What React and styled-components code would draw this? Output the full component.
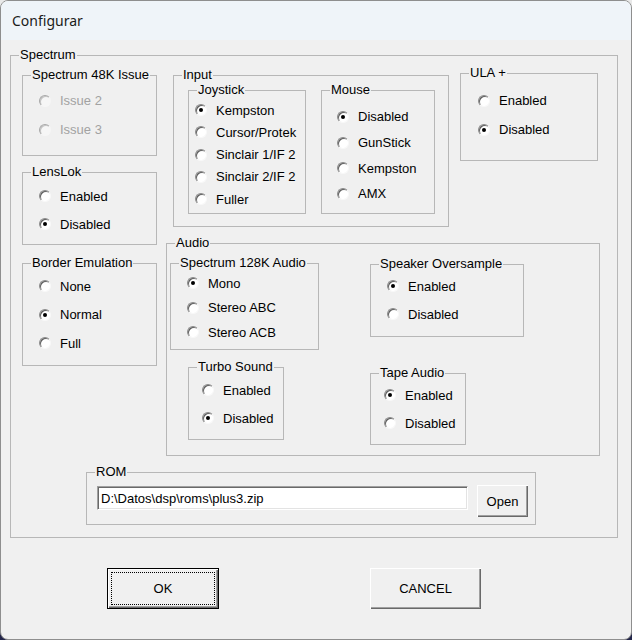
import React from 'react'
import styled, { createGlobalStyle } from 'styled-components'

const GlobalStyle = createGlobalStyle`
    html, body {
        margin: 0;
        padding: 0;
    }
    body {
        background: linear-gradient(#e9e9e9 0 50%, #23264a 50%);
        font-family: "Liberation Sans", Arial, sans-serif;
        font-size: 13px;
        color: #000;
    }
`;

const Window = styled.div`
    box-sizing: border-box;
    width: 632px;
    height: 640px;
    border: 1px solid #8e8e8e;
    border-radius: 8px;
    overflow: hidden;
    background: #f0f0f0;
    display: flex;
    flex-direction: column;
`;

const TitleBar = styled.div`
    height: 39px;
    flex-shrink: 0;
    display: flex;
    align-items: center;
    padding-left: 11px;
    background: #eff4f9;
    font-family: "Noto Sans", "Liberation Sans", sans-serif;
    font-size: 14px;
    color: #1b1b1b;
`;

const Client = styled.div`
    padding: 8px 0 0 9px;
    display: flex;
    flex-direction: column;
`;

const Group = styled.fieldset`
    box-sizing: border-box;
    margin: ${p => p.$m || '0'};
    padding: 0;
    min-width: 0;
    width: ${p => p.$w}px;
    height: ${p => (p.$h ? `${p.$h}px` : 'auto')};
    border: 1px solid #b7b7b7;
    flex-shrink: 0;

    legend {
        margin-left: 8px;
        padding: 0 1px;
        line-height: 14px;
        font-size: 13px;
        white-space: nowrap;
    }
`;

const Body = styled.div`
    display: flex;
    flex-direction: ${p => p.$dir || 'column'};
    padding: ${p => p.$pt || 0}px 0 ${p => p.$pb || 0}px ${p => p.$pl || 0}px;
`;

const Column = styled.div`
    display: flex;
    flex-direction: column;
    margin: ${p => p.$m || '0'};
`;

const Row = styled.div`
    display: flex;
    align-items: flex-start;
    margin: ${p => p.$m || '0'};
`;

const Option = styled.label`
    display: flex;
    align-items: center;
    height: ${p => p.$row}px;
    white-space: nowrap;
    color: ${p => (p.$disabled ? '#a2a2a2' : '#000')};
`;

// classic sunken radio: dark arc top-left, white face, black dot when set
const RadioDot = styled.span`
    box-sizing: border-box;
    width: 12px;
    height: 12px;
    margin-right: 9px;
    border-radius: 50%;
    border: 1px solid;
    border-color: ${p => (p.$disabled ? '#a8a8a8 #f6f6f6 #f6f6f6 #a8a8a8' : '#8a8a8a #f8f8f8 #f8f8f8 #8a8a8a')};
    box-shadow: inset 1px 1px 0 ${p => (p.$disabled ? '#c4c4c4' : '#5e5e5e')};
    background: ${p => (p.$disabled ? '#f6f6f6' : '#fff')};
    display: flex;
    align-items: center;
    justify-content: center;

    &::after {
        content: '';
        display: ${p => (p.$on ? 'block' : 'none')};
        width: 4px;
        height: 4px;
        border-radius: 50%;
        background: #000;
    }
`;

const PathInput = styled.input`
    box-sizing: border-box;
    width: 371px;
    height: 24px;
    margin-top: 1px;
    padding: 0 3px;
    font-family: "Liberation Sans", Arial, sans-serif;
    font-size: 13px;
    color: #000;
    background: #fff;
    border: 1px solid;
    border-color: #a0a0a0 #fff #fff #a0a0a0;
    box-shadow: inset 1px 1px 0 #696969, inset -1px -1px 0 #e3e3e3;
    outline: none;
`;

const Button = styled.button`
    box-sizing: border-box;
    width: ${p => p.$w}px;
    height: ${p => p.$h}px;
    margin: ${p => p.$m || '0'};
    padding: 0;
    font-family: "Liberation Sans", Arial, sans-serif;
    font-size: 13px;
    color: #000;
    background: #f0f0f0;
    border: ${p => (p.$default ? '1px solid #000' : 'none')};
    box-shadow: inset 1px 1px 0 #fff, inset -1px -1px 0 #696969, inset -2px -2px 0 #a0a0a0;
    outline: ${p => (p.$default ? '1px dotted #000' : 'none')};
    outline-offset: -5px;
`;

const ButtonBar = styled.div`
    display: flex;
    margin: 30px 0 0 97px;
`;

function Radios({ items, checked, row, pt, pl, disabled }) {
    return (
        <Body $pt={pt} $pl={pl}>
            {items.map(item => (
                <Option key={item} $row={row} $disabled={disabled}>
                    <RadioDot $on={item === checked} $disabled={disabled} />
                    {item}
                </Option>
            ))}
        </Body>
    )
}

const onOff = ['Enabled', 'Disabled']

function App() {
    return (
        <>
            <GlobalStyle />
            <Window>
                <TitleBar>Configurar</TitleBar>
                <Client>
                    <Group $w={608} $h={490}>
                        <legend>Spectrum</legend>
                        <Body $pt={4} $pl={11}>
                            <Row>
                                <Column $m="2px 0 0 0">
                                    <Group $w={135} $h={88}>
                                        <legend>Spectrum 48K Issue</legend>
                                        <Radios items={['Issue 2', 'Issue 3']} row={29} pt={4} pl={16} disabled />
                                    </Group>
                                    <Group $w={135} $h={80} $m="9px 0 0 0">
                                        <legend>LensLok</legend>
                                        <Radios items={onOff} checked="Disabled" row={28} pt={3} pl={16} />
                                    </Group>
                                    <Group $w={135} $h={110} $m="11px 0 0 0">
                                        <legend>Border Emulation</legend>
                                        <Radios items={['None', 'Normal', 'Full']} checked="Normal" row={28.5} pt={2} pl={16} />
                                    </Group>
                                </Column>

                                <Column $m="0 0 0 9px">
                                    <Row>
                                        <Group $w={276} $h={159} $m="2px 0 0 7px">
                                            <legend>Input</legend>
                                            <Body $dir="row" $pt={1} $pl={14}>
                                                <Group $w={118} $h={131}>
                                                    <legend>Joystick</legend>
                                                    <Radios
                                                        items={['Kempston', 'Cursor/Protek', 'Sinclair 1/IF 2', 'Sinclair 2/IF 2', 'Fuller']}
                                                        checked="Kempston"
                                                        row={22.25}
                                                        pt={2}
                                                        pl={6}
                                                    />
                                                </Group>
                                                <Group $w={114} $h={131} $m="0 0 0 15px">
                                                    <legend>Mouse</legend>
                                                    <Radios
                                                        items={['Disabled', 'GunStick', 'Kempston', 'AMX']}
                                                        checked="Disabled"
                                                        row={25.7}
                                                        pt={7}
                                                        pl={15}
                                                    />
                                                </Group>
                                            </Body>
                                        </Group>
                                        <Group $w={138} $h={95} $m="0 0 0 11px">
                                            <legend>ULA +</legend>
                                            <Radios items={onOff} checked="Disabled" row={29} pt={6} pl={17} />
                                        </Group>
                                    </Row>

                                    <Group $w={434} $h={220} $m="9px 0 0 0">
                                        <legend>Audio</legend>
                                        <Body $dir="row" $pt={6} $pl={3}>
                                            <Column>
                                                <Group $w={149} $h={94}>
                                                    <legend>Spectrum 128K Audio</legend>
                                                    <Radios items={['Mono', 'Stereo ABC', 'Stereo ACB']} checked="Mono" row={24.5} pt={1} pl={16} />
                                                </Group>
                                                <Group $w={96} $h={80} $m="10px 0 0 18px">
                                                    <legend>Turbo Sound</legend>
                                                    <Radios items={onOff} checked="Disabled" row={28} pt={2} pl={13} />
                                                </Group>
                                            </Column>
                                            <Column $m="1px 0 0 51px">
                                                <Group $w={154} $h={80}>
                                                    <legend>Speaker Oversample</legend>
                                                    <Radios items={onOff} checked="Enabled" row={28} pt={1} pl={16} />
                                                </Group>
                                                <Group $w={96} $h={79} $m="29px 0 0 0">
                                                    <legend>Tape Audio</legend>
                                                    <Radios items={onOff} checked="Enabled" row={28} pt={1} pl={13} />
                                                </Group>
                                            </Column>
                                        </Body>
                                    </Group>
                                </Column>
                            </Row>

                            <Group $w={450} $h={60} $m="9px 0 0 64px">
                                <legend>ROM</legend>
                                <Body $dir="row" $pt={6} $pl={10}>
                                    <PathInput readOnly value="D:\Datos\dsp\roms\plus3.zip" />
                                    <Button $w={51} $h={32} $m="0 0 0 9px">Open</Button>
                                </Body>
                            </Group>
                        </Body>
                    </Group>

                    <ButtonBar>
                        <Button $w={112} $h={41} $default>OK</Button>
                        <Button $w={111} $h={41} $m="0 0 0 151px">CANCEL</Button>
                    </ButtonBar>
                </Client>
            </Window>
        </>
    )
}

export default App
